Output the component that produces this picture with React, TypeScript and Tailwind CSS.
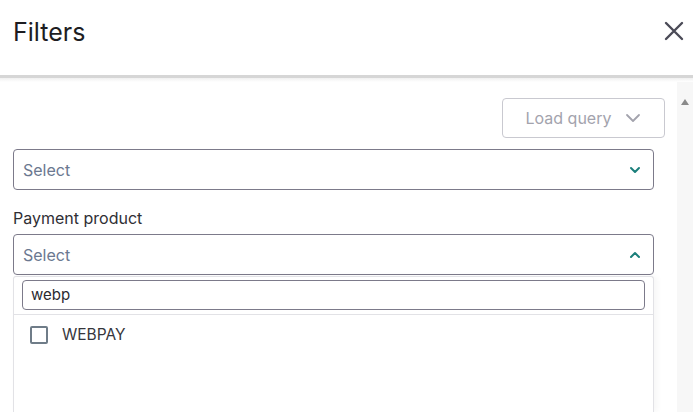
import React from "react";

export default function App() {
  return (
    <div className="w-[693px] h-[412px] overflow-hidden bg-white flex flex-col" style={{ fontFamily: "Inter, 'Noto Sans', sans-serif" }}>
      <div className="h-[75px] shrink-0 flex items-center justify-between pl-[13px] pr-[9px]">
        <div className="text-[25px] text-[#1d1d22] leading-none -mt-[11px]">Filters</div>
        <svg width="20" height="20" viewBox="0 0 20 20" className="-mt-[14px]" fill="none" stroke="#4b4b57" strokeWidth="2.4" strokeLinecap="round">
          <path d="M2 2 L18 18 M18 2 L2 18" />
        </svg>
      </div>
      <div className="h-[3px] shrink-0 bg-[#d6d6d6]" />
      <div className="h-[4px] shrink-0 bg-gradient-to-b from-[#f0f0f0] to-white" />
      <div className="flex-1 flex min-h-0">
        <div className="flex-1 flex flex-col pl-[13px] pr-[23px] pt-[16px]">
          <div className="flex justify-end">
            <button className="w-[163px] h-[40px] -mr-[11px] rounded-[4px] border border-[#c9c9d0] flex items-center justify-center gap-[14px] text-[16px] text-[#a3a3ad]">
              <span>Load query</span>
              <svg width="16" height="16" viewBox="0 0 16 16" fill="none" stroke="#a3a3ad" strokeWidth="1.8" strokeLinecap="round" strokeLinejoin="round">
                <path d="M2 5 L8 11 L14 5" />
              </svg>
            </button>
          </div>
          <div className="mt-[11px] h-[41px] rounded-[4px] border border-[#7c7a8a] flex items-center justify-between pl-[9px] pr-[12px]">
            <span className="text-[16px] text-[#6b7890]">Select</span>
            <svg width="12" height="12" viewBox="0 0 12 12" fill="none" stroke="#1b7f7b" strokeWidth="2" strokeLinecap="round" strokeLinejoin="round">
              <path d="M2 4 L6 8 L10 4" />
            </svg>
          </div>
          <div className="mt-[17px] text-[16px] text-[#2f2f35] leading-[22px]">Payment product</div>
          <div className="mt-[5px] h-[41px] rounded-[4px] border border-[#7c7a8a] flex items-center justify-between pl-[9px] pr-[12px]">
            <span className="text-[16px] text-[#6b7890]">Select</span>
            <svg width="12" height="12" viewBox="0 0 12 12" fill="none" stroke="#1b7f7b" strokeWidth="2" strokeLinecap="round" strokeLinejoin="round">
              <path d="M2 8 L6 4 L10 8" />
            </svg>
          </div>
          <div className="mt-[1px] flex-1 border-l border-r border-t border-[#e2e2e6] rounded-t-[3px] shadow-[3px_0_6px_rgba(0,0,0,0.04)] bg-white flex flex-col">
            <div className="px-[8px] pt-[3px] pb-[4px] border-b border-[#e2e2e6]">
              <div className="h-[30px] rounded-[4px] border border-[#7c7a8a] flex items-center pl-[8px] text-[15px] text-[#2a2a30]">webp</div>
            </div>
            <div className="flex items-center pl-[16px] pt-[8px] gap-[14px]">
              <div className="w-[18px] h-[18px] rounded-[2px] border-2 border-[#6f7c88]" />
              <span className="text-[15.5px] text-[#36363c]">WEBPAY</span>
            </div>
          </div>
        </div>
        <div className="w-[16px] bg-[#f7f7f7] flex justify-center pt-[17px]">
          <svg width="8" height="6" viewBox="0 0 8 6">
            <path d="M0 6 L4 0 L8 6 Z" fill="#8a8a8a" />
          </svg>
        </div>
      </div>
    </div>
  );
}
